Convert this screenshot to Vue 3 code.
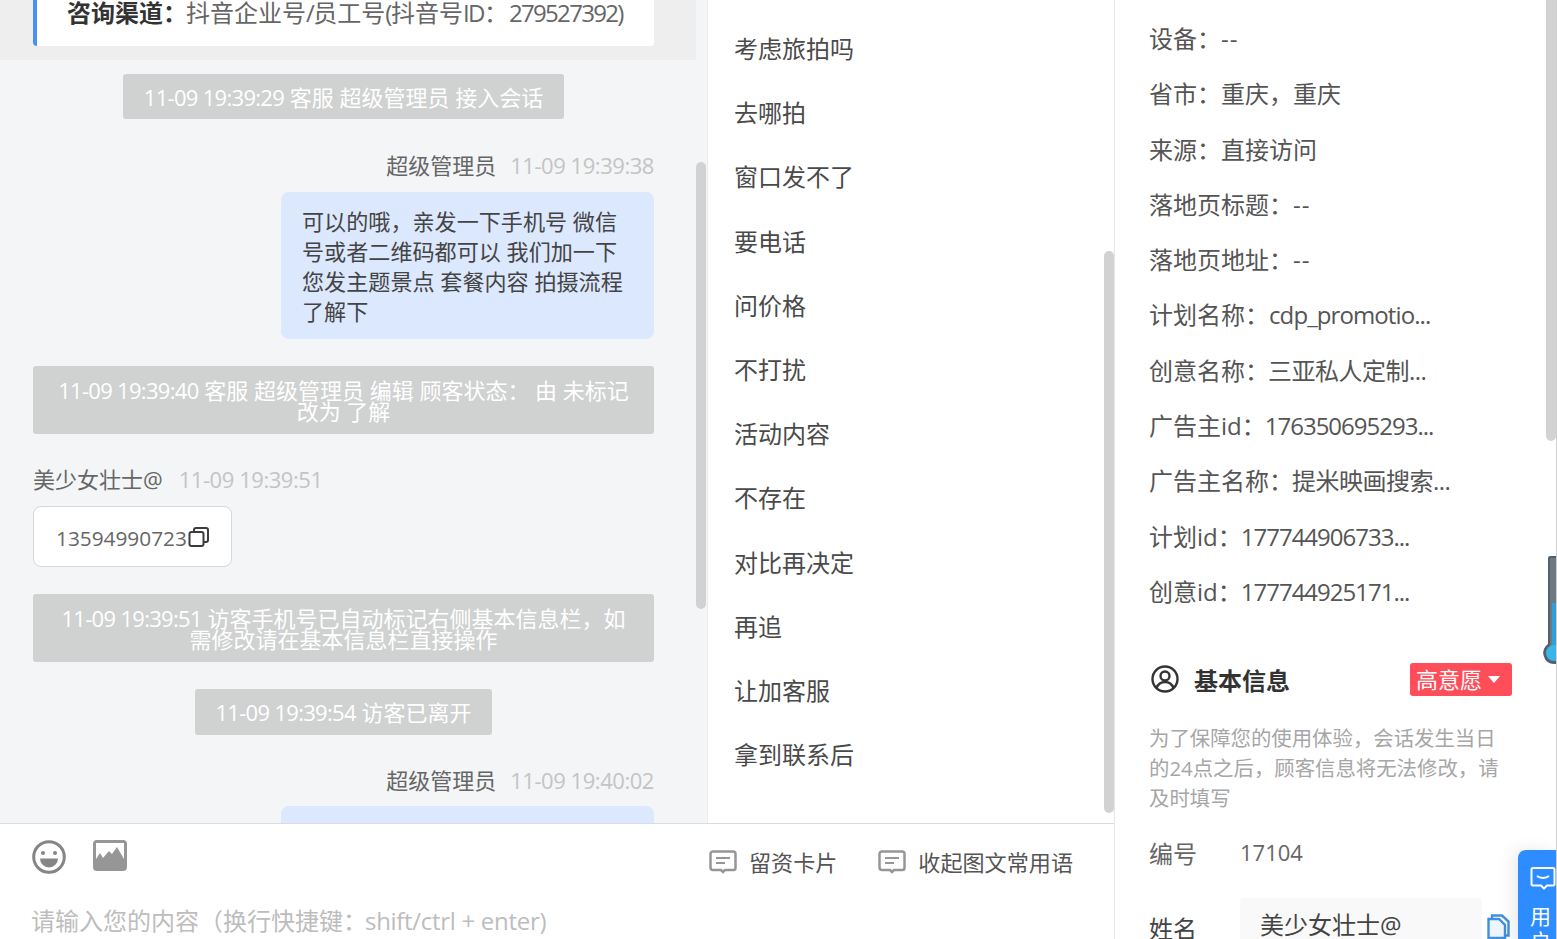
<script setup>
const phrases = ['考虑旅拍吗','去哪拍','窗口发不了','要电话','问价格','不打扰','活动内容','不存在','对比再决定','再追','让加客服','拿到联系后']
const details = [
  { label: '设备：', value: '--', kind: 'dash' },
  { label: '省市：', value: '重庆，重庆', kind: '' },
  { label: '来源：', value: '直接访问', kind: '' },
  { label: '落地页标题：', value: '--', kind: 'dash' },
  { label: '落地页地址：', value: '--', kind: 'dash' },
  { label: '计划名称：', value: 'cdp_promotio...', kind: 'word' },
  { label: '创意名称：', value: '三亚私人定制...', kind: 'cjk' },
  { label: '广告主id：', value: '176350695293...', kind: 'digits' },
  { label: '广告主名称：', value: '提米映画搜索...', kind: 'cjk' },
  { label: '计划id：', value: '177744906733...', kind: 'digits' },
  { label: '创意id：', value: '177744925171...', kind: 'digits' }
]
</script>

<template>
  <div class="page">
    <div class="left">
      <div class="top">
        <section class="chat">
          <div class="notice">
            <div class="notice-card"><b>咨询渠道：</b>抖音企业号<span class="tight">/</span>员工号<span class="tight">(</span>抖音号<span class="tight">ID</span>：<span class="squeeze">279527392)</span></div>
          </div>
          <div class="thread">
            <div class="sys first"><span class="stamp">11-09 19:39:29</span> 客服 超级管理员 接入会话</div>
            <div class="meta right"><span>超级管理员</span><span class="time">11-09 19:39:38</span></div>
            <div class="bubble">可以的哦，亲发一下手机号 微信号或者二维码都可以 我们加一下 您发主题景点 套餐内容 拍摄流程 了解下</div>
            <div class="sys wide"><span class="stamp">11-09 19:39:40</span> 客服 超级管理员 编辑 顾客状态： 由 未标记 改为 了解</div>
            <div class="meta"><span>美少女壮士@</span><span class="time">11-09 19:39:51</span></div>
            <div class="phone">
              <span>13594990723</span>
              <svg width="22" height="20" viewBox="0 0 22 20" fill="none" stroke="#3c3c3c" stroke-width="2"><rect x="1.5" y="5" width="14" height="14" rx="2"/><path d="M6 5V3a2 2 0 0 1 2-2h10a2 2 0 0 1 2 2v10a2 2 0 0 1-2 2h-2.500"/></svg>
            </div>
            <div class="sys wide"><span class="stamp">11-09 19:39:51</span> 访客手机号已自动标记右侧基本信息栏，如需修改请在基本信息栏直接操作</div>
            <div class="sys leave"><span class="stamp">11-09 19:39:54</span> 访客已离开</div>
            <div class="meta right"><span>超级管理员</span><span class="time">11-09 19:40:02</span></div>
            <div class="bubble tail"></div>
          </div>
          <i class="bar chat-bar"></i>
        </section>
        <section class="phrases">
          <div v-for="p in phrases" :key="p" class="phrase">{{ p }}</div>
          <i class="bar phrase-bar"></i>
        </section>
      </div>
      <footer class="composer">
        <div class="tools">
          <div class="tool-icons">
            <svg width="34" height="34" viewBox="0 0 34 34"><circle cx="17" cy="17" r="15.300" fill="none" stroke="#858585" stroke-width="3"/><circle cx="11" cy="13" r="2" fill="#858585"/><circle cx="23" cy="13" r="2" fill="#858585"/><path d="M8 18.500h18a9 9 0 0 1-18 0z" fill="#858585"/></svg>
            <svg width="34" height="32" viewBox="0 0 34 32"><rect width="34" height="31" rx="4" fill="#969696"/><path d="M3 19V3h28v16l-7-12-5 7-3-3-6 7-3-5z" fill="#fff"/></svg>
          </div>
          <div class="actions">
            <span class="action">
              <svg width="28" height="24" viewBox="0 0 28 24" fill="none" stroke="#969696" stroke-width="2.500"><path d="M4 1.500h20a2.500 2.500 0 0 1 2.500 2.500v14a2 2 0 0 1-2 2H16l-2 2-2-2H4a2.500 2.500 0 0 1-2.500-2.500V4A2.500 2.500 0 0 1 4 1.500z"/><path d="M7 8h14M7 13h9" stroke-width="2"/></svg>
              留资卡片
            </span>
            <span class="action">
              <svg width="28" height="24" viewBox="0 0 28 24" fill="none" stroke="#969696" stroke-width="2.500"><path d="M4 1.500h20a2.500 2.500 0 0 1 2.500 2.500v14a2 2 0 0 1-2 2H16l-2 2-2-2H4a2.500 2.500 0 0 1-2.500-2.500V4A2.500 2.500 0 0 1 4 1.500z"/><path d="M7 8h14M7 13h9" stroke-width="2"/></svg>
              收起图文常用语
            </span>
          </div>
        </div>
        <div class="placeholder">请输入您的内容（换行快捷键：<span class="ph-latin">shift/ctrl + enter)</span></div>
      </footer>
    </div>

    <aside class="side">
      <div class="details">
        <div v-for="d in details" :key="d.label" class="detail">{{ d.label }}<span :class="d.kind">{{ d.value }}</span></div>
      </div>
      <div class="info-head">
        <svg width="28" height="28" viewBox="0 0 28 28" fill="none" stroke="#333" stroke-width="2.400"><circle cx="14" cy="14" r="12.500"/><circle cx="14" cy="11" r="4.500"/><path d="M5.500 23c1.500-4 4.500-6 8.500-6s7 2 8.500 6"/></svg>
        <b>基本信息</b>
        <span class="tag">高意愿<i class="caret"></i></span>
      </div>
      <p class="note">为了保障您的使用体验，会话发生当日的24点之后，顾客信息将无法修改，请及时填写</p>
      <div class="field num"><label>编号</label><span>17104</span></div>
      <div class="field name">
        <label>姓名</label>
        <div class="input">美少女壮士@</div>
        <svg class="copy" width="23" height="25" viewBox="0 0 23 25" fill="none" stroke="#3f8fe0" stroke-width="2.400"><path d="M5 5V1.500h10l6.500 6v14H18"/><path d="M1.500 5H12l6 6v13H1.500z" fill="#eef5fd"/></svg>
      </div>
      <i class="bar side-bar"></i>
      <svg class="thermo" width="16" height="112" viewBox="0 0 16 112">
        <path d="M8 3a2 2 0 0 1 2-2h6v108h-2a11 11 0 0 1-6-20z" fill="#52616e"/>
        <rect x="10" y="3" width="6" height="88" fill="#6d7a84"/>
        <rect x="12" y="48" width="4" height="44" fill="#2f9fdc"/>
        <circle cx="14" cy="98" r="8" fill="#39b5e8"/>
      </svg>
      <div class="float">
        <svg width="26" height="26" viewBox="0 0 26 26" fill="none" stroke="#fff" stroke-width="2"><path d="M3 2h20a1.500 1.500 0 0 1 1.500 1.500V18a1.500 1.500 0 0 1-1.500 1.500h-6l-3 3-3-3H3A1.500 1.500 0 0 1 1.500 18V3.500A1.500 1.500 0 0 1 3 2z"/><path d="M7 10c3 2.500 9 2.500 12 0"/></svg>
        <span>用户</span>
      </div>
    </aside>
  </div>
</template>

<style>
html, body { margin: 0; overflow: hidden; background: #fff; }
</style>

<style scoped>
.page {
  width: 1557px;
  height: 939px;
  display: flex;
  overflow: hidden;
  position: relative;
  font-family: "Open Sans", "Noto Sans CJK SC", sans-serif;
  font-weight: 400;
  color: #4a4a4a;
}
.left { width: 1115px; flex: none; display: flex; flex-direction: column; border-right: 1px solid #e6e6e6; box-sizing: border-box; }
.top { height: 824px; flex: none; display: flex; border-bottom: 1px solid #dcdcdc; box-sizing: border-box; overflow: hidden; }
.chat { width: 707px; flex: none; background: #f3f5f7; position: relative; border-right: 1px solid #ececec; overflow: hidden; }
.notice { width: 696px; height: 60px; background: #eeeeee; padding-left: 33px; box-sizing: border-box; }
.notice-card {
  width: 621px; height: 46px; box-sizing: border-box; background: #fff;
  border-left: 4px solid #4d8df6; border-radius: 0 0 4px 4px;
  padding-left: 30px; font-size: 24px; line-height: 26px; color: #666; white-space: nowrap;
}
.notice-card b { font-weight: 700; color: #333; margin-right: -1px; }
.tight { letter-spacing: -1.5px; }
.squeeze { letter-spacing: -1.7px; margin-left: 1px; }
.thread { width: 621px; margin-left: 33px; display: flex; flex-direction: column; align-items: flex-start; }
.sys {
  background: #d0d1d1; color: #fff; border-radius: 3px; font-size: 22px;
  line-height: 22px; padding: 12px 21px 11px; margin-top: 27px; text-align: center; box-sizing: border-box; align-self: center;
}
.sys.first { margin-top: 14px; white-space: nowrap; }
.sys.leave { white-space: nowrap; padding: 12px 20px; }
.sys.wide { align-self: stretch; line-height: 21px; padding: 13.500px 21px 12.500px; }
.stamp { letter-spacing: -0.7px; }
.meta { height: 30px; margin-top: 31px; display: flex; gap: 16px; font-size: 22px; line-height: 30px; color: #666; white-space: nowrap; }
.first + .meta { margin-top: 31px; }
.wide + .meta { margin-top: 30px; }
.meta + .bubble { margin-top: 12px; }
.meta + .phone { margin-top: 12px; }
.meta.right { align-self: flex-end; gap: 14px; }
.time { color: #c4c4c4; letter-spacing: -0.45px; }
.bubble {
  width: 373px; box-sizing: border-box; align-self: flex-end; padding: 13.500px 20px 13.500px 21px;
  background: #dce8fd; border-radius: 8px; font-size: 22.100px; line-height: 30px; color: #444;
}
.bubble.tail { height: 40px; flex: none; }
.leave + .meta + .bubble { margin-top: 11px; }
.leave + .meta { margin-top: 30px; }
.phone {
  width: 199px; height: 61px; box-sizing: border-box; background: #fff; border: 1px solid #d8d8d8;
  border-radius: 8px; display: flex; align-items: center; padding: 2px 0 0 22px; font-size: 20.800px; color: #666;
}
.phone svg { margin: -2px 0 0 1px; }
.bar { position: absolute; background: #d2d2d2; border-radius: 5px; display: block; width: 10px; }
.chat-bar { left: 696px; top: 162px; height: 447px; }
.phrases { flex: 1; padding: 17px 0 0 26px; position: relative; background: #fff; }
.phrase { height: 64.200px; line-height: 64.200px; font-size: 24px; white-space: nowrap; }
.phrase-bar { right: 0; top: 251px; height: 562px; }
.composer { flex: 1; background: #fff; padding: 16px 0 0 32px; position: relative; }
.tools { display: flex; justify-content: space-between; align-items: flex-start; height: 62px; padding-right: 41px; }
.tool-icons { display: flex; gap: 27px; }
.actions { display: flex; gap: 41px; padding-top: 9px; }
.action { display: flex; align-items: center; gap: 12px; font-size: 22.100px; line-height: 26px; color: #555; white-space: nowrap; }
.placeholder { font-size: 24px; line-height: 40px; color: #bdbdbd; white-space: nowrap; margin: -1px 0 0 -1px; }
.ph-latin { letter-spacing: -0.3px; margin-left: -2px; }
.side { flex: 1; position: relative; padding-left: 34px; box-sizing: border-box; border-right: 1px solid #cfcfcf; overflow: hidden; }
.details { padding-top: 11px; }
.detail { height: 55.300px; line-height: 55.300px; font-size: 24px; color: #555; white-space: nowrap; }
.digits { letter-spacing: -1px; margin-left: -1px; }
.word { letter-spacing: -0.9px; }
.cjk { letter-spacing: -0.5px; margin-left: -1px; }
.dash { letter-spacing: 1px; }
.info-head { margin-top: 43px; height: 34px; display: flex; align-items: center; padding-left: 2px; padding-right: 44px; }
.info-head svg { flex: none; }
.info-head b { font-size: 24px; font-weight: 700; color: #333; margin-left: 15px; }
.tag {
  margin-left: auto; width: 102px; height: 33px; box-sizing: border-box; background: #ff4d5a; color: #fff;
  border-radius: 3px; font-size: 22px; line-height: 33px; padding-left: 6px; display: flex; align-items: center; gap: 6px; white-space: nowrap;
}
.caret { width: 0; height: 0; border: 6px solid transparent; border-top: 7px solid #fff; border-bottom: 0; display: block; }
.note { margin: 27px 44px 0 0; font-size: 20.400px; line-height: 30px; color: #a6a6a6; }
.field { display: flex; align-items: center; }
.field label { width: 91px; flex: none; font-size: 24px; color: #666; }
.field.num { margin-top: 19px; height: 40px; }
.field.num span { font-size: 22px; color: #666; }
.field.name { margin-top: 26px; align-items: flex-start; position: relative; }
.field.name label { padding-top: 12px; color: #444; }
.input { width: 242px; height: 60px; box-sizing: border-box; background: #f9f9f9; border-radius: 4px; padding: 9px 0 0 20px; font-size: 24px; line-height: 36px; color: #444; }
.copy { margin: 16px 0 0 5px; }
.side-bar { right: 0; top: -10px; height: 451px; }
.thermo { position: absolute; right: 0; top: 555px; }
.float {
  position: absolute; right: -1px; top: 850px; width: 39px; height: 100px; box-sizing: border-box; padding: 16px 0 0 12px;
  background: #2d8cff; border-radius: 8px 0 0 0; box-shadow: -6px 0 16px rgba(0,0,0,.08); color: #fff;
}
.float svg { display: block; margin-bottom: 12px; }
.float span { display: block; width: 22px; font-size: 21px; line-height: 25px; }
</style>
